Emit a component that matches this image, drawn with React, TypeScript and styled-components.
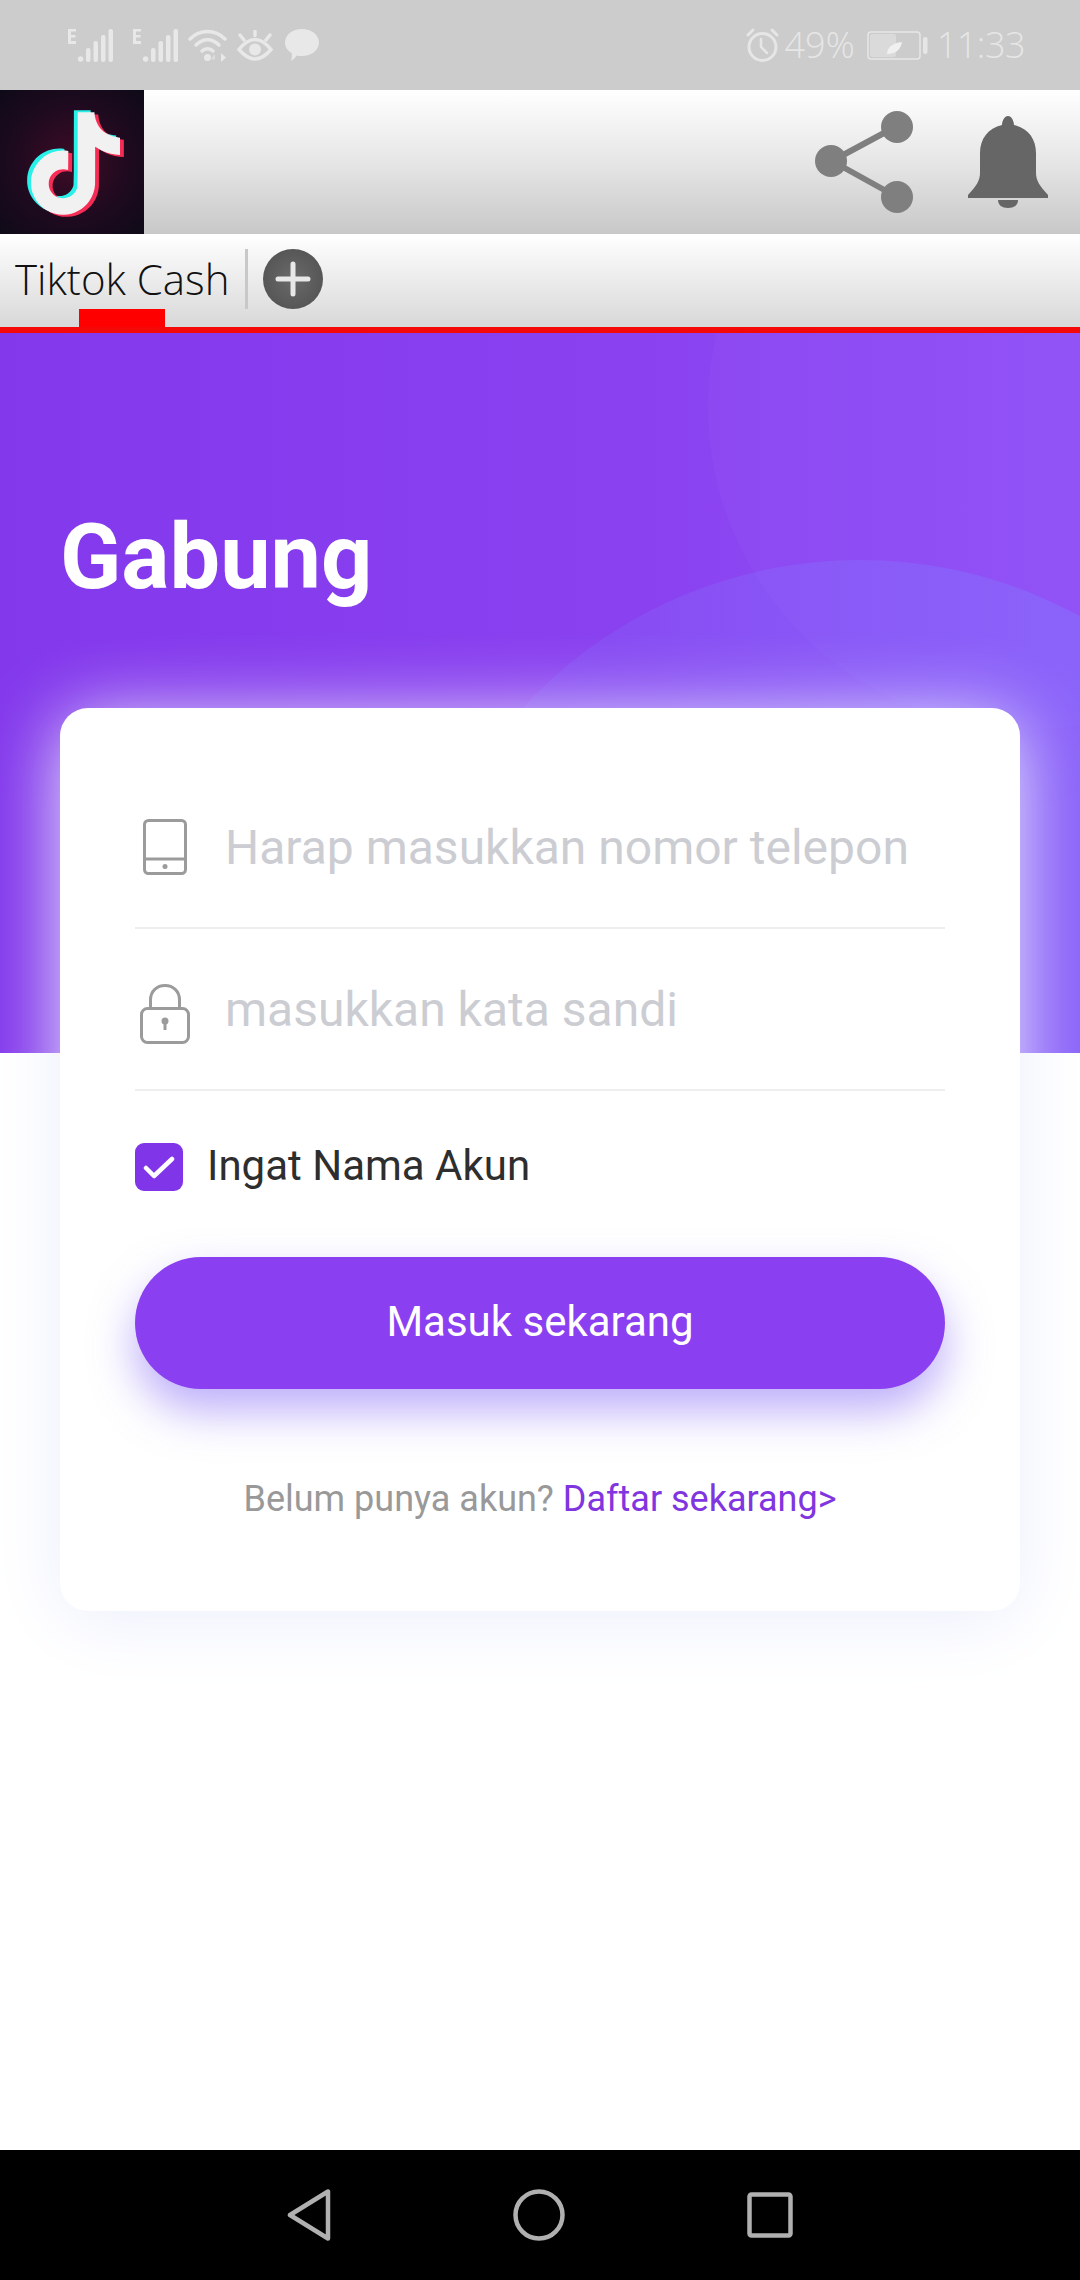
import React from 'react'
import styled, { createGlobalStyle } from 'styled-components'

const GlobalStyle = createGlobalStyle`
    html, body {
        margin: 0;
        padding: 0;
        background: #fff;
    }
    * {
        box-sizing: border-box;
    }
`

const Page = styled.div`
    width: 1080px;
    height: 2280px;
    display: flex;
    flex-direction: column;
    overflow: hidden;
    background: #fff;
    font-family: Roboto, "Liberation Sans", sans-serif;
`

const StatusBar = styled.div`
    height: 90px;
    flex-shrink: 0;
    display: flex;
    align-items: center;
    justify-content: space-between;
    padding: 0 55px 0 68px;
    background: #cccccc;
    color: #e6e6e6;
`

const StatusGroup = styled.div`
    display: flex;
    align-items: center;
`

const StatusText = styled.span`
    font-family: "Open Sans", sans-serif;
    font-weight: 300;
    font-size: 36px;
    line-height: 44px;
`

const StatusClock = styled(StatusText)`
    letter-spacing: -0.5px;
`

const AppHeader = styled.div`
    height: 144px;
    flex-shrink: 0;
    display: flex;
    align-items: center;
    background: linear-gradient(180deg, #ffffff 0%, #e6e6e6 50%, #c8c8c8 100%);
`

const LogoTile = styled.div`
    width: 144px;
    height: 144px;
    padding: 3px 0 0 6px;
    display: flex;
    align-items: center;
    justify-content: center;
    background: radial-gradient(circle at 50% 50%, #3f0c26 0%, #1f0a1f 55%, #0e0a18 100%);
`

const HeaderActions = styled.div`
    margin-left: auto;
    display: flex;
    align-items: center;
    gap: 54px;
    padding-right: 32px;
`

const TabBar = styled.div`
    height: 99px;
    flex-shrink: 0;
    display: flex;
    align-items: flex-start;
    padding: 15px 0 0 15px;
    background: linear-gradient(180deg, #ffffff 0%, #d8d8d8 100%);
    border-bottom: 6px solid #f40808;
`

const Tab = styled.div`
    position: relative;
    height: 60px;
    width: 230px;
    font-family: "Open Sans", sans-serif;
    font-weight: 300;
    font-size: 42px;
    line-height: 60px;
    color: #111;
    white-space: nowrap;
`

const TabMarker = styled.span`
    position: absolute;
    left: 64px;
    top: 60px;
    width: 86px;
    height: 18px;
    background: #ff0000;
`

const TabDivider = styled.div`
    width: 3px;
    height: 60px;
    background: #c8c8c8;
`

const AddTab = styled.div`
    width: 60px;
    height: 60px;
    margin-left: 15px;
    border-radius: 50%;
    display: flex;
    align-items: center;
    justify-content: center;
    background: radial-gradient(circle, #6a6a6a 0%, #4e4e4e 100%);
`

const Body = styled.div`
    position: relative;
    flex: 1;
    display: flex;
    flex-direction: column;
`

const Hero = styled.div`
    position: relative;
    height: 720px;
    padding: 170px 0 0 60px;
    overflow: hidden;
    background: linear-gradient(90deg, #8338ec 0%, #8a42f0 60%, #9050f5 100%);
`

const HeroCircle = styled.div<{ $size: number; $left: number; $top: number; $tint: string }>`
    position: absolute;
    width: ${p => p.$size}px;
    height: ${p => p.$size}px;
    left: ${p => p.$left}px;
    top: ${p => p.$top}px;
    border-radius: 50%;
    background: ${p => p.$tint};
`

const Title = styled.h1`
    position: relative;
    margin: 0;
    font-size: 90px;
    line-height: 110px;
    font-weight: 700;
    color: #fff;
`

const Card = styled.div`
    position: relative;
    margin: -345px 60px 0;
    height: 903px;
    padding: 59px 75px 0;
    background: #fff;
    border-radius: 28px;
    box-shadow: 0 10px 76px #eceffc;
`

const FieldRow = styled.div`
    height: 162px;
    display: flex;
    align-items: center;
    border-bottom: 2px solid #eeeeee;
`

const FieldIcon = styled.div<{ $drop?: number }>`
    width: 90px;
    display: flex;
    justify-content: center;
    padding-right: 30px;
    padding-top: ${p => p.$drop ?? 0}px;
`

const Placeholder = styled.span`
    font-size: 48px;
    color: #cccdd2;
    white-space: nowrap;
`

const RememberRow = styled.div`
    margin-top: 52px;
    display: flex;
    align-items: flex-start;
    gap: 24px;
`

const CheckBox = styled.div`
    width: 48px;
    height: 48px;
    border-radius: 9px;
    display: flex;
    align-items: center;
    justify-content: center;
    background: #8035e8;
`

const RememberLabel = styled.span`
    font-size: 42px;
    line-height: 46px;
    color: #2e2e2e;
`

const SubmitButton = styled.button`
    display: block;
    width: 100%;
    height: 132px;
    margin-top: 66px;
    border: 0;
    padding: 0 0 3px;
    border-radius: 66px;
    background: #8a3ff0;
    color: #fff;
    font-family: inherit;
    font-size: 42px;
    box-shadow: 0 22px 44px rgba(125, 95, 245, 0.5);
`

const FooterLine = styled.div`
    margin-top: 88px;
    text-align: center;
    font-size: 36px;
    line-height: 44px;
    color: #999999;
`

const FooterLink = styled.a`
    color: #8035e0;
`

const NavBar = styled.div`
    position: relative;
    height: 130px;
    flex-shrink: 0;
    margin-top: auto;
    display: flex;
    align-items: center;
    justify-content: center;
    gap: 182px;
    background: #000;
`

const TIKTOK_PATH =
    'M12.525.02c1.31-.02 2.61-.01 3.91-.02.08 1.53.63 3.09 1.75 4.17 1.12 1.11 2.7 1.62 4.24 1.79v4.03c-1.44-.05-2.89-.35-4.2-.97-.57-.26-1.1-.59-1.62-.93-.01 2.92.01 5.84-.02 8.75-.08 1.4-.54 2.79-1.35 3.94-1.31 1.92-3.58 3.17-5.91 3.21-1.43.08-2.86-.31-4.08-1.03-2.02-1.19-3.44-3.37-3.65-5.71-.02-.5-.03-1-.01-1.49.18-1.9 1.12-3.72 2.58-4.96 1.66-1.44 3.98-2.13 6.15-1.72.02 1.48-.04 2.96-.04 4.44-.99-.32-2.15-.23-3.02.37-.63.41-1.11 1.04-1.36 1.75-.21.51-.15 1.07-.14 1.61.24 1.64 1.82 3.02 3.5 2.87 1.12-.01 2.19-.66 2.77-1.61.19-.33.4-.67.41-1.06.1-1.79.06-3.57.07-5.36.01-4.03-.01-8.05.02-12.07z'

const TiktokLogo = () => (
    <svg width="111" height="111" viewBox="-1 -1 26 26" preserveAspectRatio="none">
        <path d={TIKTOK_PATH} fill="#2af0ea" transform="translate(-0.9 -0.5)" />
        <path d={TIKTOK_PATH} fill="#f52c55" transform="translate(0.9 0.5)" />
        <path d={TIKTOK_PATH} fill="#f1f1f1" />
    </svg>
)

const SignalIcon = ({ gap }: { gap: number }) => (
    <svg width="45" height="33" viewBox="0 0 45 33" fill="#e8e8e8" style={{ marginRight: gap }}>
        <path d="M0 0h8v2.500H3v3.500h4.500v2.500H3v3.500h5V15H0z" />
        <circle cx="12.600" cy="30" r="2.700" />
        <rect x="18" y="19" width="4.500" height="14" rx="2" />
        <rect x="25.500" y="12" width="4.500" height="21" rx="2" />
        <rect x="33" y="6" width="4.500" height="27" rx="2" />
        <rect x="40.500" y="0" width="4.500" height="33" rx="2" />
    </svg>
)

const WifiIcon = () => (
    <svg width="39" height="33" viewBox="0 0 39 33" fill="none" stroke="#e8e8e8" strokeWidth="3.500" strokeLinecap="round">
        <path d="M2 10C12 0 27 0 37 10" />
        <path d="M8 16C15 9 24 9 31 16" />
        <path d="M14 22C17 19 22 19 25 22" />
        <circle cx="19.500" cy="28.500" r="3.500" fill="#e8e8e8" stroke="none" />
        <path d="M27 25l-3.500 4v1.500H27z" fill="#dcdcdc" stroke="none" />
        <path d="M33 24v9l5-4.500z" fill="#e8e8e8" stroke="none" />
    </svg>
)

const EyeIcon = () => (
    <svg width="36" height="31" viewBox="0 0 36 31" fill="none" stroke="#e8e8e8" strokeWidth="3.500" strokeLinecap="round" style={{ margin: '0 12px 0 10px' }}>
        <path d="M2 19.500C8 12 13 9.500 18 9.500S28 12 34 19.500C28 26.500 23 29 18 29S8 26.500 2 19.500z" />
        <circle cx="18" cy="19.500" r="6" fill="#e8e8e8" stroke="none" />
        <path d="M18 1.500v4M3 5l4 5M33 5l-4 5" />
    </svg>
)

const ChatIcon = () => (
    <svg width="34" height="32" viewBox="0 0 34 32" fill="#e8e8e8">
        <path d="M17 0c9.400 0 17 5.800 17 13.500S26.400 27 17 27c-2 0-3.500-.2-5-.6C10 28.500 8 31 6 32c.8-2.500 1-5 .8-7.800C2.600 21.700 0 18 0 13.500 0 5.800 7.600 0 17 0z" />
    </svg>
)

const AlarmIcon = () => (
    <svg width="33" height="34" viewBox="0 0 33 34" fill="none" stroke="#e6e6e6" strokeWidth="3" strokeLinecap="round" style={{ marginRight: 6 }}>
        <circle cx="16.500" cy="19" r="13.500" />
        <path d="M15 11v8l6 6" strokeWidth="2.500" />
        <path d="M2 7l5-5M31 7l-5-5" />
    </svg>
)

const BatteryIcon = () => (
    <svg width="61" height="29" viewBox="0 0 61 29" fill="none" style={{ margin: '0 9px 0 12px' }}>
        <rect x="1" y="1" width="52" height="27" rx="3" stroke="#e6e6e6" strokeWidth="1.500" />
        <rect x="3" y="3" width="26" height="23" rx="2" fill="#dadada" />
        <rect x="56" y="6" width="4.500" height="17" rx="2" fill="#e6e6e6" />
        <path d="M20 23c0-7 6-11 15-12-1 7-6 12-15 12z" fill="#f0f0f0" />
    </svg>
)

const ShareIcon = () => (
    <svg width="99" height="104" viewBox="0 0 99 104" fill="#7f7f7f">
        <path d="M17 51L82 16M17 51L82 87" stroke="#7f7f7f" strokeWidth="6" fill="none" />
        <circle cx="16" cy="51" r="16" />
        <circle cx="82" cy="17" r="16" />
        <circle cx="82" cy="87" r="16" />
    </svg>
)

const BellIcon = () => (
    <svg width="80" height="92" viewBox="0 0 80 92" fill="#666666">
        <path d="M34 9c0-4 2.500-9 6-9s6 5 6 9c14 3 22 14 22 28v20c0 8 4 13 12 22v3H0v-3c8-9 12-14 12-22V37C12 23 20 12 34 9z" />
        <path d="M30 84h20c0 5-4 8-10 8s-10-3-10-8z" />
    </svg>
)

const PlusIcon = () => (
    <svg width="36" height="36" viewBox="0 0 36 36" stroke="#e8e8e8" strokeWidth="5" strokeLinecap="round">
        <path d="M18 3v30M3 18h30" />
    </svg>
)

const PhoneIcon = () => (
    <svg width="44" height="56" viewBox="0 0 44 56" fill="none" stroke="#9b9b9b" strokeWidth="3">
        <rect x="1.500" y="1.500" width="41" height="53" rx="4" />
        <path d="M1.500 40h41" />
        <circle cx="22" cy="47.500" r="2.500" fill="#9b9b9b" stroke="none" />
    </svg>
)

const LockIcon = () => (
    <svg width="50" height="60" viewBox="0 0 50 60" fill="none" stroke="#9b9b9b" strokeWidth="3">
        <rect x="1.500" y="24.500" width="47" height="34" rx="6" />
        <path d="M10.500 24.500V16C10.500 7 17 1.500 25 1.500S39.500 7 39.500 16v8.500" />
        <circle cx="25" cy="37" r="3.500" fill="#9b9b9b" stroke="none" />
        <path d="M25 38v8" />
    </svg>
)

const CheckIcon = () => (
    <svg width="32" height="26" viewBox="0 0 32 26" fill="none" stroke="#fff" strokeWidth="4.500" strokeLinecap="round" strokeLinejoin="round">
        <path d="M3 14l8 8L29 5" />
    </svg>
)

const BackIcon = () => (
    <svg width="44" height="52" viewBox="0 0 44 52" fill="none" stroke="#b0b0b0" strokeWidth="4.500" strokeLinejoin="round">
        <path d="M3 26L41 2.500v47z" />
    </svg>
)

const HomeIcon = () => (
    <svg width="52" height="52" viewBox="0 0 52 52" fill="none" stroke="#b0b0b0" strokeWidth="4.500">
        <circle cx="26" cy="26" r="23.500" />
    </svg>
)

const RecentIcon = () => (
    <svg width="46" height="46" viewBox="0 0 46 46" fill="none" stroke="#b0b0b0" strokeWidth="4.500" strokeLinejoin="round">
        <rect x="2.500" y="2.500" width="41" height="41" rx="2" />
    </svg>
)

const App = () => {
    return (
        <Page>
            <GlobalStyle />
            <StatusBar>
                <StatusGroup>
                    <SignalIcon gap={20} />
                    <SignalIcon gap={10} />
                    <WifiIcon />
                    <EyeIcon />
                    <ChatIcon />
                </StatusGroup>
                <StatusGroup>
                    <AlarmIcon />
                    <StatusText>49%</StatusText>
                    <BatteryIcon />
                    <StatusClock>11:33</StatusClock>
                </StatusGroup>
            </StatusBar>
            <AppHeader>
                <LogoTile>
                    <TiktokLogo />
                </LogoTile>
                <HeaderActions>
                    <ShareIcon />
                    <BellIcon />
                </HeaderActions>
            </AppHeader>
            <TabBar>
                <Tab>
                    Tiktok Cash
                    <TabMarker />
                </Tab>
                <TabDivider />
                <AddTab>
                    <PlusIcon />
                </AddTab>
            </TabBar>
            <Body>
                <Hero>
                    <HeroCircle $size={644} $left={708} $top={-248} $tint="rgba(160, 110, 255, 0.12)" />
                    <HeroCircle
                        $size={918}
                        $left={401}
                        $top={227}
                        $tint="linear-gradient(90deg, rgba(130, 120, 255, 0.1) 0%, rgba(130, 120, 255, 0.55) 100%)"
                    />
                    <Title>Gabung</Title>
                </Hero>
                <Card>
                    <FieldRow>
                        <FieldIcon>
                            <PhoneIcon />
                        </FieldIcon>
                        <Placeholder>Harap masukkan nomor telepon</Placeholder>
                    </FieldRow>
                    <FieldRow>
                        <FieldIcon $drop={10}>
                            <LockIcon />
                        </FieldIcon>
                        <Placeholder>masukkan kata sandi</Placeholder>
                    </FieldRow>
                    <RememberRow>
                        <CheckBox>
                            <CheckIcon />
                        </CheckBox>
                        <RememberLabel>Ingat Nama Akun</RememberLabel>
                    </RememberRow>
                    <SubmitButton>Masuk sekarang</SubmitButton>
                    <FooterLine>
                        Belum punya akun? <FooterLink>Daftar sekarang&gt;</FooterLink>
                    </FooterLine>
                </Card>
                <NavBar>
                    <BackIcon />
                    <HomeIcon />
                    <RecentIcon />
                </NavBar>
            </Body>
        </Page>
    )
}

export default App
